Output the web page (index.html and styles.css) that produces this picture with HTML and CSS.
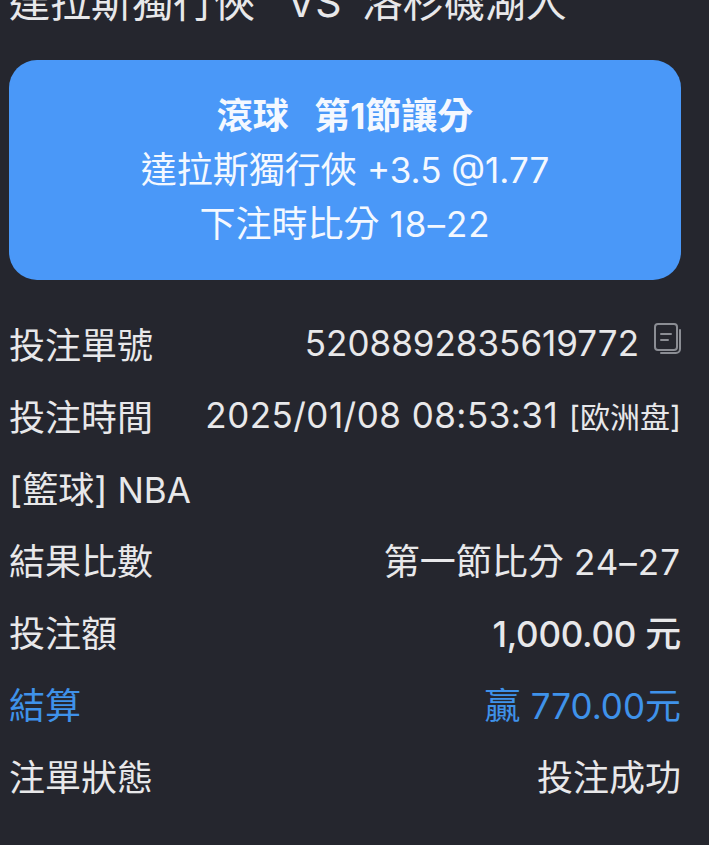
FILE: index.html
```html
<!DOCTYPE html>
<html lang="zh-Hant">
<head>
    <meta charset="UTF-8">
    <title>注單詳情</title>
    <link rel="stylesheet" href="styles.css">
</head>
<body>
    <h1 class="match">達拉斯獨行俠&nbsp; <span class="vs">VS</span> &nbsp;洛杉磯湖人</h1>
    <div class="card">
        <div class="card-title">滾球 &nbsp;&nbsp;第<span class="num">1</span>節讓分</div>
        <div>達拉斯獨行俠 <span class="num">+3.5 @1.77</span></div>
        <div>下注時比分 <span class="num score">18–22</span></div>
    </div>
    <div class="rows">
        <div class="row"><span>投注單號</span><span class="val"><span class="num">5208892835619772</span>
            <svg class="copy" viewBox="0 0 27 31" fill="none" stroke="#8b8d94" stroke-width="2" stroke-linecap="round"><rect x="1" y="1" width="22" height="26" rx="3"/><path d="M7 11h10M7 17h7M26 7v19a4 4 0 0 1-4 4H7"/></svg></span></div>
        <div class="row"><span>投注時間</span><span class="val"><span class="num date">2025/01/08 08:53:31</span><small>[欧洲盘]</small></span></div>
        <div class="row"><span>[籃球] <span class="num">NBA</span></span></div>
        <div class="row"><span>結果比數</span><span class="val"><span>第一節比分 <span class="num score">24–27</span></span></span></div>
        <div class="row"><span>投注額</span><span class="val bold"><span><span class="num">1,000.00</span> 元</span></span></div>
        <div class="row blue"><span>結算</span><span class="val"><span>贏 <span class="num">770.00</span>元</span></span></div>
        <div class="row"><span>注單狀態</span><span class="val">投注成功</span></div>
    </div>
</body>
</html>
```
FILE: styles.css
```css
html, body { height: 845px; overflow: hidden; }
body { margin: 0; padding: 0 28px 0 9px; background: #25262e; color: #e8e8ea; font-family: Inter, "Noto Sans CJK TC", sans-serif; font-size: 36px; }
.num { font-size: 35px; }
.score { letter-spacing: 1px; }
.match { margin: -23px 0 0; height: 83px; line-height: 50px; font-size: 41px; font-weight: 400; white-space: nowrap; }
.vs { margin-left: 9px; margin-right: -3px; }
.card { height: 220px; box-sizing: border-box; padding: 29px 0 0; background: #4a98f8; border-radius: 28px; color: #f4f8ff; text-align: center; line-height: 54px; }
.card-title { font-weight: 700; }
.rows { margin-top: 27px; }
.row { display: flex; justify-content: space-between; align-items: center; height: 72px; white-space: nowrap; }
.val { display: flex; align-items: center; gap: 13px; }
.date { letter-spacing: .47px; margin-right: -2px; }
.bold { font-weight: 500; letter-spacing: -.3px; }
.blue { color: #3f92ea; }
small { font-size: 30px; }
.copy { width: 27px; height: 31px; margin: 0 0 10px 2px; }
```
